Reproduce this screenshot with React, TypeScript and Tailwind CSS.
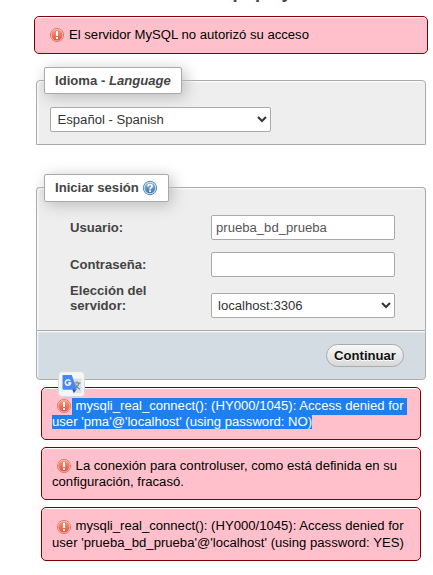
import type { ReactNode } from 'react';

function ErrorIcon({ className = '' }: { className?: string }) {
  return (
    <svg className={`block h-[16px] w-[16px] shrink-0 ${className}`} viewBox="0 0 16 16">
      <defs>
        <linearGradient id="err" x1="0" y1="0" x2="0" y2="1">
          <stop offset="0" stopColor="#f39a80" />
          <stop offset="1" stopColor="#e35340" />
        </linearGradient>
      </defs>
      <circle cx="8" cy="8" r="6.6" fill="#fbc4b6" stroke="#dc7466" strokeWidth="0.9" />
      <circle cx="8" cy="8" r="5.5" fill="url(#err)" />
      <path d="M7 4h2v5H7z" fill="#fff" />
      <rect x="7" y="10" width="2" height="2" fill="#fff" />
    </svg>
  );
}

function HelpIcon() {
  return (
    <svg className="block h-[16px] w-[16px]" viewBox="0 0 16 16">
      <defs>
        <linearGradient id="help" x1="0" y1="0" x2="0" y2="1">
          <stop offset="0" stopColor="#8db6d8" />
          <stop offset="1" stopColor="#3c75ad" />
        </linearGradient>
      </defs>
      <circle cx="8" cy="8" r="6.7" fill="#cfe3f3" stroke="#477fb2" strokeWidth="0.9" />
      <circle cx="8" cy="8" r="5.3" fill="url(#help)" />
      <path d="M5.9 6.5C5.9 3.9 10.1 4 10.1 6.3 10.1 7.7 8.1 7.7 8.1 9.4" fill="none" stroke="#fff" strokeWidth="1.6" />
      <rect x="7.2" y="10.3" width="1.8" height="1.7" fill="#fff" />
    </svg>
  );
}

function TranslateBadge() {
  return (
    <div className="absolute left-[16px] top-[-17px] flex h-[26px] w-[27px] items-center justify-center rounded-[4px] border border-[#dadada] bg-[#f5f5f5]">
      <svg className="h-[20px] w-[20px]" viewBox="0 0 20 20">
        <path d="M8 4.500h10.500q1 0 1 1v12.500q0 1-1 1h-5z" fill="#dcdfe1" />
        <path d="M10 15h4.800L11.800 19.200z" fill="#3548c5" />
        <path d="M1.500 1H9.800L14.800 15.800H1.500Q.5 15.800 .5 14.800V2Q.5 1 1.500 1z" fill="#4687f3" />
        <path d="M8.200 7A2.700 2.700 0 1 0 8.700 9H6.200" fill="none" stroke="#fff" strokeWidth="1.400" />
        <path d="M12.300 9H18.500M15 7.500v1.500M17 9.200C16.500 11.500 15.200 13 13.500 14.200M13.400 10.500C14.200 12.500 16 14 17.900 15.200" fill="none" stroke="#69848c" strokeWidth="1.200" />
      </svg>
    </div>
  );
}

function ErrorBox({ className, children }: { className: string; children: ReactNode }) {
  return (
    <div className={`relative rounded-[5px] border border-[#800000] bg-[#ffc0cb] text-black shadow-[inset_0_1px_1px_#fff] ${className}`}>
      {children}
    </div>
  );
}

const inputClass =
  'block h-[25px] w-[184px] rounded-[2px] border border-[#aaa] bg-white px-[4px] text-[13.12px] text-[#555]';
const legendClass =
  'ml-[7px] flex items-center rounded-[2px] border border-[#aaa] bg-white px-[10px] font-bold shadow-[3px_3px_15px_#bbb]';

export default function App() {
  return (
    <div className="h-[575px] overflow-hidden bg-white font-['Liberation_Sans',Arial,sans-serif] text-[13.12px] leading-[15px] text-[#444]">
      <main className="ml-[36px] w-[390px]">
        <h1 className="-mt-[19px] h-[22px] text-center text-[18.37px] font-bold leading-[22px]">
          Bienvenido a phpMyAdmin
        </h1>
        <ErrorBox className="-ml-[2px] mt-[13px] flex h-[38px] w-[394px] items-start pl-[14px] pt-[10px]">
          <ErrorIcon />
          <span className="ml-[4px]">El servidor MySQL no autorizó su acceso</span>
        </ErrorBox>

        <section className="mt-[26px] h-[65px] rounded-t-[4px] border border-[#aaa] bg-[#eee] shadow-[inset_1px_1px_2px_#fff]">
          <h2 className={`${legendClass} -mt-[14px] h-[27px] w-[138px]`}>
            Idioma -&nbsp;<i>Language</i>
          </h2>
          <select className="ml-[13px] mt-[13px] block h-[25px] w-[221px] rounded-[2px] border border-[#aaa] bg-white p-[2px] pl-[2.5px] text-[13.12px] text-[#333]">
            <option>Español - Spanish</option>
          </select>
        </section>

        <form>
          <section className="mt-[42px] h-[143px] rounded-t-[4px] border border-b-0 border-[#aaa] bg-[#eee] shadow-[inset_1px_1px_2px_#fff]">
            <h2 className={`${legendClass} -mt-[14px] h-[28px] w-[125px]`}>
              <span className="pb-px">Iniciar sesión</span>
              <span className="ml-[3px]"><HelpIcon /></span>
            </h2>
            <div className="ml-[33px] mt-[13px] flex items-center font-bold">
              <label className="w-[141px]">Usuario:</label>
              <input className={`${inputClass} font-normal`} defaultValue="prueba_bd_prueba" />
            </div>
            <div className="ml-[33px] mt-[12px] flex items-center font-bold">
              <label className="w-[141px]">Contraseña:</label>
              <input className={`${inputClass} font-normal`} type="password" />
            </div>
            <div className="ml-[33px] mt-[6px] flex items-start font-bold">
              <label className="w-[141px]">Elección del<br />servidor:</label>
              <select className="mt-[10px] block h-[25px] w-[184px] rounded-[2px] border border-[#aaa] bg-white p-[2px] text-[13.12px] font-normal text-[#333]">
                <option>localhost:3306</option>
              </select>
            </div>
          </section>
          <footer className="flex h-[50px] items-start justify-end rounded-b-[4px] border border-[#aaa] bg-[#d3dce3] pr-[21px] pt-[13px] shadow-[inset_1px_1px_2px_#fff]">
            <button
              type="button"
              className="h-[23px] w-[78px] rounded-[12px] border border-[#aaa] bg-linear-to-b from-[#f8f8f8] to-[#d8d8d8] text-[13.12px] font-bold leading-[15px] text-[#111] [text-shadow:0_1px_0_#fff]"
            >
              Continuar
            </button>
          </footer>
        </form>

        <div className="ml-[5px] mt-[7px] flex w-[380px] flex-col gap-[7px] whitespace-nowrap">
          <ErrorBox className="h-[53px] pl-[10px] pt-[10px]">
            <TranslateBadge />
            <div className="flex h-[17px] items-start pl-[4px] text-white">
              <ErrorIcon />
              <span className="h-[17px] w-[335px] bg-[#1e80f0] pl-[3.6px] leading-[15px]">
                mysqli_real_connect(): (HY000/1045): Access denied for
              </span>
            </div>
            <div className="flex text-white">
              <span className="h-[14px] bg-[#1e80f0] leading-[13px]">user 'pma'@'localhost' (using password: NO)</span>
            </div>
          </ErrorBox>
          <ErrorBox className="h-[53px] pl-[10px] pt-[10px]">
            <div className="flex h-[16px] items-start pl-[4px]">
              <ErrorIcon />
              <span className="pl-[3.6px]">La conexión para controluser, como está definida en su</span>
            </div>
            <div>configuración, fracasó.</div>
          </ErrorBox>
          <ErrorBox className="h-[54px] pl-[10px] pt-[10px]">
            <div className="flex h-[17px] items-start pl-[4px]">
              <ErrorIcon className="mt-px" />
              <span className="pl-[3.6px]">mysqli_real_connect(): (HY000/1045): Access denied for</span>
            </div>
            <div>user 'prueba_bd_prueba'@'localhost' (using password: YES)</div>
          </ErrorBox>
        </div>
      </main>
    </div>
  );
}
